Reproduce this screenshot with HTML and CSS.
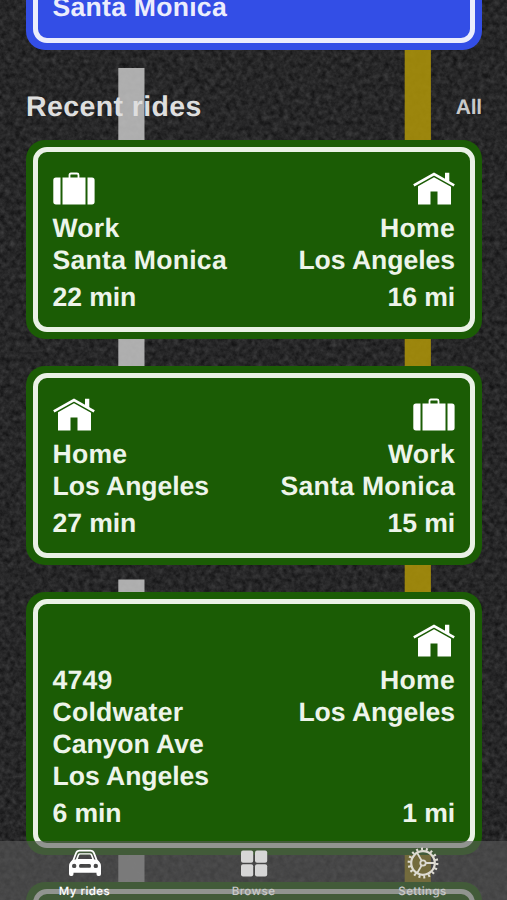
FILE: index.html
```html
<!DOCTYPE html>
<html lang="en">
<head>
<meta charset="utf-8">
<meta name="viewport" content="width=device-width, initial-scale=1">
<title>My rides</title>
<link rel="stylesheet" href="styles.css">
</head>
<body>
<svg class="defs" aria-hidden="true">
  <symbol id="case" viewBox="0 0 42 33">
    <path d="M16.500 6V3Q16.500 1.500 18 1.500H24Q25.500 1.500 25.500 3V6" fill="none" stroke="#fff" stroke-width="1.800"/>
    <path d="M3 5.500H7.500V32.500H3Q.3 32.500 .3 29.800V8.200Q.3 5.500 3 5.500ZM9.500 5.500H32.500V32.500H9.500ZM34.500 5.500H39Q41.600 5.500 41.600 8.200V29.800Q41.600 32.500 39 32.500H34.500Z" fill="#fff"/>
  </symbol>
  <symbol id="house" viewBox="0 0 42 33">
    <path d="M.8 13.300L21 2L41.200 13.300" fill="none" stroke="#fff" stroke-width="2.600"/>
    <path d="M32 .8H36.300V11L32 8.500ZM21 5.200L38 14.700V32.500H24.500V19.500H17.500V32.500H5V14.200Z" fill="#fff"/>
  </symbol>
</svg>
<svg class="road" viewBox="0 0 507 900" aria-hidden="true">
  <filter id="grain" x="0" y="0" width="100%" height="100%" color-interpolation-filters="sRGB">
    <feTurbulence type="fractalNoise" baseFrequency=".19" numOctaves="3" seed="21"/>
    <feColorMatrix values=".19 .07 0 0 .022  .19 .07 0 0 .022  .19 .07 0 0 .026  0 0 0 0 1"/>
  </filter>
  <rect width="507" height="900" filter="url(#grain)"/>
  <g fill="#c2c2c2" fill-opacity=".88">
    <rect x="118.300" y="68" width="26.200" height="320"/>
    <rect x="118.300" y="579.500" width="26.200" height="321"/>
  </g>
  <rect x="404.700" width="26.200" height="900" fill="#a8900a" fill-opacity=".9"/>
</svg>

<main class="screen">
  <section class="sign sign-blue">
    <div class="frame"><div class="place">Santa Monica</div></div>
  </section>

  <header class="heading">
    <h2>Recent rides</h2>
    <a class="all">All</a>
  </header>

  <div class="rides">
    <article class="sign">
      <div class="frame">
        <div class="ends">
          <div class="place"><svg class="icon"><use href="#case"/></svg><span>Work</span><span>Santa Monica</span></div>
          <div class="place to"><svg class="icon"><use href="#house"/></svg><span>Home</span><span class="tight">Los Angeles</span></div>
        </div>
        <div class="stats"><span>22 min</span><span>16 mi</span></div>
      </div>
    </article>
    <article class="sign">
      <div class="frame">
        <div class="ends">
          <div class="place"><svg class="icon"><use href="#house"/></svg><span>Home</span><span class="tight">Los Angeles</span></div>
          <div class="place to"><svg class="icon"><use href="#case"/></svg><span>Work</span><span>Santa Monica</span></div>
        </div>
        <div class="stats"><span>27 min</span><span>15 mi</span></div>
      </div>
    </article>
    <article class="sign">
      <div class="frame">
        <div class="ends">
          <div class="place"><div class="icon"></div><span>4749</span><span>Coldwater</span><span class="tight">Canyon Ave</span><span class="tight">Los Angeles</span></div>
          <div class="place to"><svg class="icon"><use href="#house"/></svg><span>Home</span><span class="tight">Los Angeles</span></div>
        </div>
        <div class="stats"><span>6 min</span><span>1 mi</span></div>
      </div>
    </article>
    <article class="sign"><div class="frame next"></div></article>
  </div>
</main>

<nav class="tabs">
  <a class="tab active">
    <svg viewBox="0 0 34 34">
      <path d="M4.600 16L8 7.200Q9 4.700 11.500 4.700H22.500Q25 4.700 26 7.200L29.400 16" fill="none" stroke="#fff" stroke-width="1.800"/>
      <path fill-rule="evenodd" fill="#fff" d="M7.800 13.500L9.800 8.600Q10.400 7.200 11.800 7.200H22.200Q23.600 7.200 24.200 8.600L26.200 13.500H28.500Q33 16 33 20V28Q33 30 31.200 30H30.200Q28.500 30 28.500 28V26.800H5.500V28Q5.500 30 3.800 30H2.800Q1 30 1 28V20Q1 16 5.500 13.500ZM9.800 13H24.200L22.800 9.300Q22.500 8.600 21.800 8.600H12.200Q11.500 8.600 11.200 9.300ZM6.200 17.700A2.200 2.200 0 1 0 6.200 22.100A2.200 2.200 0 1 0 6.200 17.700ZM27.800 17.700A2.200 2.200 0 1 0 27.800 22.100A2.200 2.200 0 1 0 27.800 17.700ZM12.500 18Q11 18 11 19.900Q11 21.800 12.500 21.800H21.500Q23 21.800 23 19.900Q23 18 21.500 18Z"/>
    </svg>
    <span>My rides</span>
  </a>
  <a class="tab">
    <svg viewBox="0 0 34 34" fill="#d6d6d6">
      <rect x="4" y="4.500" width="12.200" height="12.200" rx="2"/><rect x="18" y="4.500" width="12.200" height="12.200" rx="2"/>
      <rect x="4" y="18.300" width="12.200" height="12.200" rx="2"/><rect x="18" y="18.300" width="12.200" height="12.200" rx="2"/>
    </svg>
    <span>Browse</span>
  </a>
  <a class="tab">
    <svg viewBox="0 0 34 34" fill="none" stroke="#dedbd2">
      <circle cx="17" cy="17" r="11.800" stroke-width="2.200"/>
      <circle cx="17" cy="17" r="13.900" stroke-width="3" stroke-dasharray="2 2.852"/>
      <circle cx="17" cy="17" r="2.700" stroke-width="1.800"/>
      <path d="M20 17H29M15.500 14.400L11 6.600M15.500 19.600L11 27.400" stroke-width="1.900"/>
    </svg>
    <span>Settings</span>
  </a>
</nav>
</body>
</html>
```

FILE: styles.css
```css
* { box-sizing: border-box; }

body {
  margin: 0;
  height: 900px;
  overflow: hidden;
  position: relative;
  background: #272727;
  color: #edf4ea;
  font-family: "Liberation Sans", Arial, sans-serif;
  text-rendering: geometricPrecision;
}

.defs { position: absolute; width: 0; height: 0; }

.road { position: absolute; top: 0; left: 0; width: 507px; height: 900px; }

.screen {
  position: relative;
  height: 900px;
  overflow: hidden;
  padding: 0 25px 0 26px;
}

.sign {
  padding: 7px;
  border-radius: 19px;
  background: #1b5c05;
}

.frame {
  border: 5px solid #eaf1e6;
  border-radius: 14px;
  padding: 19.500px 15px 14.500px 14.500px;
  font-size: 26.600px;
  font-weight: 700;
  line-height: 32px;
  letter-spacing: .25px;
}

.tight { letter-spacing: -.05px; }

.sign-blue { margin-top: -30px; height: 79.500px; background: #334ee6; }
.sign-blue .frame { height: 65.500px; padding-top: 9px; border-color: #ebedfc; color: #ebedfc; }

.heading {
  display: flex;
  justify-content: space-between;
  align-items: flex-start;
  height: 90.500px;
  padding-top: 41px;
  color: #dedede;
}

.heading h2 {
  margin: 0;
  font-size: 28.500px;
  line-height: 32px;
  letter-spacing: .4px;
}

.all { font-size: 21px; line-height: 33px; font-weight: 700; color: #c9c9c9; letter-spacing: -.2px; }

.rides { display: flex; flex-direction: column; gap: 27px; }

.ends, .stats { display: flex; justify-content: space-between; }

.place { display: flex; flex-direction: column; }
.to { align-items: flex-end; text-align: right; }

.icon { display: block; width: 42px; height: 33px; margin-bottom: 7px; }

.stats { margin-top: 5px; letter-spacing: -.1px; }

.next { height: 190px; }

.tabs {
  position: absolute;
  left: 0;
  right: 0;
  bottom: 0;
  height: 59.500px;
  display: grid;
  grid-template-columns: repeat(3, 1fr);
  background: rgba(91, 91, 91, .62);
}

.tab {
  display: flex;
  flex-direction: column;
  align-items: center;
  padding-top: 5.300px;
  color: #c9c9c9;
  font: 500 11.500px/14px Inter, sans-serif;
  letter-spacing: .45px;
}

.tab svg { width: 34px; height: 34px; margin-bottom: 4.200px; }

.active { color: #fff; }
```
